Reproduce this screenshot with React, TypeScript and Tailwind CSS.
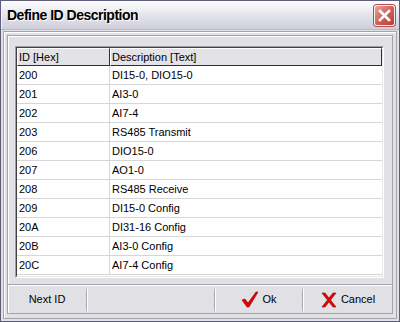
const rows: [string, string][] = [
  ['200', 'DI15-0, DIO15-0'],
  ['201', 'AI3-0'],
  ['202', 'AI7-4'],
  ['203', 'RS485 Transmit'],
  ['206', 'DIO15-0'],
  ['207', 'AO1-0'],
  ['208', 'RS485 Receive'],
  ['209', 'DI15-0 Config'],
  ['20A', 'DI31-16 Config'],
  ['20B', 'AI3-0 Config'],
  ['20C', 'AI7-4 Config'],
];

function CheckIcon() {
  return (
    <svg width="18" height="18" viewBox="0 0 18 18">
      <path d="M1 9 L4 8 L7 12 L15 1 L17 1 L8 16 L6 16 Z" fill="#e00000" stroke="#8a0000" strokeWidth="0.6" />
    </svg>
  );
}

function CrossIcon() {
  return (
    <svg width="16" height="16" viewBox="0 0 16 16">
      <path
        d="M1 1 L4 1 L8 6 L12 1 L15 1 L9.5 8 L15 15 L12 15 L8 10 L4 15 L1 15 L6.5 8 Z"
        fill="#e80000"
        stroke="#900000"
        strokeWidth="0.6"
      />
    </svg>
  );
}

function Sep() {
  return <div className="w-[2px] my-[4px] mb-[2px] border-l border-[#a7a6ae] bg-white" />;
}

export default function App() {
  return (
    <div
      className="w-[400px] h-[322px] flex flex-col border border-[#5e5e7c] bg-[#e1e0e5] text-[11px] text-black overflow-hidden"
      style={{ fontFamily: '"Liberation Sans", Arial, sans-serif' }}
    >
      {/* title bar */}
      <div className="h-[28px] flex items-center pl-[5px] pr-[4px] bg-gradient-to-b from-[#fdfdfe] via-[#e4e4ec] to-[#cfcfdb] border-l border-[#f4f4f8]">
        <span className="text-[14px] font-bold tracking-[-0.5px] text-black pt-[1px] [text-shadow:1px_1px_0_#ffffff]">
          Define ID Description
        </span>
        <button className="ml-auto w-[21px] h-[21px] rounded-[3px] border border-[#f3eef0] bg-gradient-to-br from-[#eba39a] via-[#d4605a] to-[#b83a34] shadow-[0_0_0_1px_#b05050] flex items-center justify-center">
          <svg width="13" height="13" viewBox="0 0 13 13">
            <path d="M2 2 L11 11 M11 2 L2 11" stroke="white" strokeWidth="2.6" strokeLinecap="square" />
          </svg>
        </button>
      </div>

      {/* body */}
      <div className="flex-1 flex flex-col pt-[1px] px-[2px] pb-[2px] border-t border-[#b9b9c6]">
        <div className="flex-1 flex flex-col border border-[#a3a3ae] shadow-[inset_1px_1px_0_#ffffff] pt-[3px] px-[3px] pb-[4px]">
          <div className="flex-1 flex flex-col border border-[#a3a3ae] shadow-[inset_1px_1px_0_#ffffff]">
            {/* grid */}
            <div className="pt-[10px] pl-[7px] pr-[8px] pb-[6px]">
              <div className="h-[232px] border border-t-[#a0a0a0] border-l-[#a0a0a0] border-r-white border-b-white">
                <div className="h-full flex flex-col border border-t-[#404040] border-l-[#404040] border-r-[#e8e8e8] border-b-[#e8e8e8] bg-white">
                  <div className="flex h-[18px] bg-[#e3e2e7]">
                    <div className="w-[93px] pl-[1px] flex items-center border-t border-l border-t-white border-l-white border-r border-b border-r-[#303030] border-b-[#303030] shrink-0">
                      ID [Hex]
                    </div>
                    <div className="flex-1 pl-[1px] flex items-center border-t border-l border-t-white border-l-white border-r border-b border-r-[#303030] border-b-[#303030]">
                      Description [Text]
                    </div>
                  </div>
                  {rows.map(([id, desc]) => (
                    <div key={id} className="flex h-[19px] border-b border-[#d6d6d6]">
                      <div className="w-[93px] pl-[2px] flex items-center border-r border-[#d6d6d6] shrink-0">{id}</div>
                      <div className="flex-1 pl-[2px] flex items-center">{desc}</div>
                    </div>
                  ))}
                </div>
              </div>
            </div>

            {/* bottom bar */}
            <div className="flex-1 flex border-t border-[#a3a3ae] shadow-[inset_0_1px_0_#ffffff]">
              <div className="w-[78px] flex items-center justify-center pt-[1px]">Next ID</div>
              <Sep />
              <div className="w-[126px]" />
              <Sep />
              <div className="w-[86px] flex items-center justify-center gap-[3px] pt-[1px]">
                <CheckIcon />
                <span>Ok</span>
              </div>
              <Sep />
              <div className="flex-1 flex items-center justify-center gap-[4px] pt-[1px]">
                <CrossIcon />
                <span>Cancel</span>
              </div>
            </div>
          </div>
        </div>
      </div>
    </div>
  );
}
